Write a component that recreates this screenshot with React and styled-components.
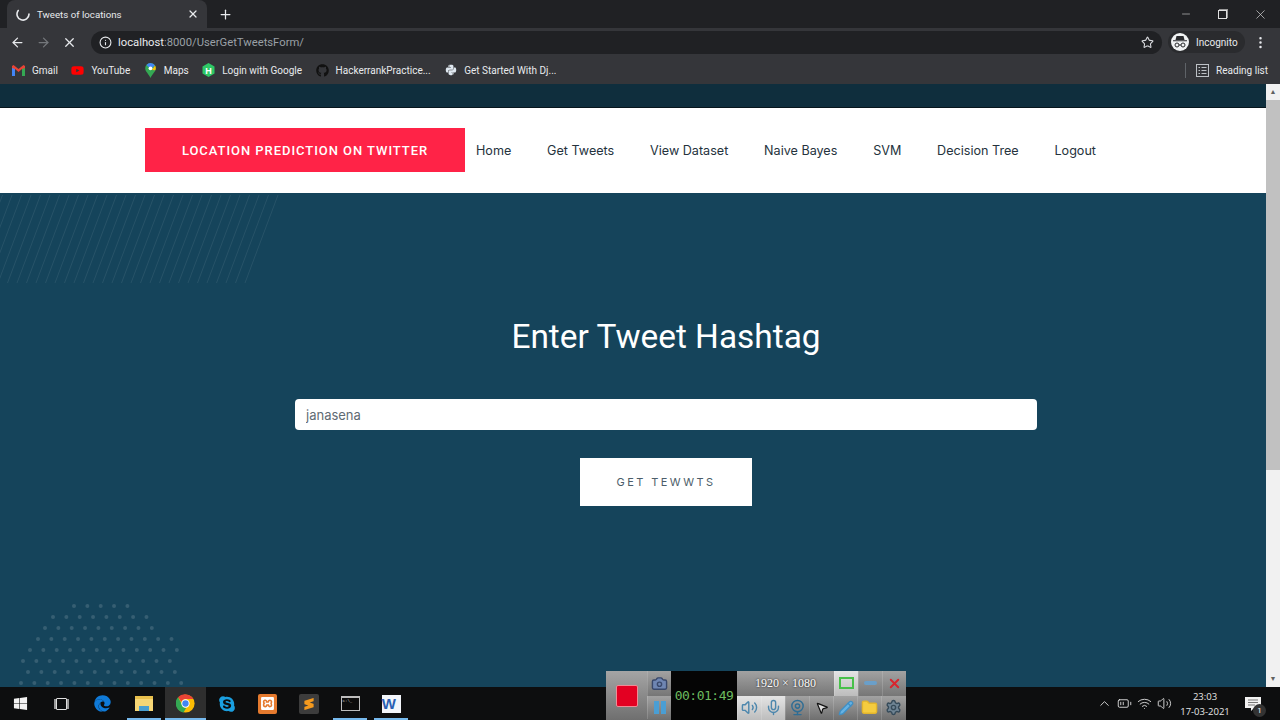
import React from 'react';
import styled, { createGlobalStyle } from 'styled-components';
import {
  ArrowLeft, ArrowRight, X, Plus, Info, Star, MoreVertical, ChevronUp, Wifi, Volume2,
  Camera, Mic, Webcam, MousePointer2, Pencil, Folder, Settings, Minus,
  BatteryMedium,
} from 'lucide-react';
import { FaWindows, FaEdge, FaSkype, FaGithub, FaPython, FaYoutube } from 'react-icons/fa';
import { SiXampp, SiSublimetext } from 'react-icons/si';

const bookmarks = [
  { name: 'Gmail', icon: <GmailIcon /> },
  { name: 'YouTube', icon: <FaYoutube size={13} color="#f00" /> },
  { name: 'Maps', icon: <MapsIcon /> },
  { name: 'Login with Google', icon: <HexBadge /> },
  { name: 'HackerrankPractice...', icon: <FaGithub size={13} color="#111" /> },
  { name: 'Get Started With Dj...', icon: <FaPython size={12} color="#dfe8f0" /> },
];

const navLinks = ['Home', 'Get Tweets', 'View Dataset', 'Naive Bayes', 'SVM', 'Decision Tree', 'Logout'];

const dotRows = [
  [74, 5], [53, 8], [45, 9], [38, 11], [30, 12], [23, 12], [28, 12], [21, 13],
];

function GmailIcon() {
  return (
    <svg width="13" height="11" viewBox="0 0 13 11">
      <path d="M0 1v10h3V4l3.500 3L10 4v7h3V1l-1.500-1L6.500 4 1.500 0z" fill="#ea4335" />
      <path d="M0 3v8h3V4z" fill="#4285f4" />
      <path d="M10 4v7h3V3z" fill="#34a853" />
    </svg>
  );
}

function MapsIcon() {
  return (
    <svg width="11" height="15" viewBox="0 0 11 15">
      <path d="M5.500 0a5.300 5.300 0 0 1 5.300 5.300c0 3.500-3.500 5.500-5.300 9.700C3.700 10.800.2 8.800.2 5.300A5.300 5.300 0 0 1 5.500 0z" fill="#34a853" />
      <path d="M1.500 2a5.300 5.300 0 0 1 4-2 5.300 5.300 0 0 1 4.500 2.500L5.500 6z" fill="#4285f4" />
      <path d="M10 2.500c1 1.600 1 3.300.2 4.800L7 7z" fill="#fbbc04" />
      <circle cx="5.500" cy="5.300" r="1.900" fill="#fff" />
    </svg>
  );
}

function HexBadge() {
  return (
    <svg width="13" height="14" viewBox="0 0 13 14">
      <polygon points="6.500,0 12.500,3.500 12.500,10.500 6.500,14 .5,10.500 .5,3.500" fill="#2ec866" />
      <text x="6.500" y="10.500" textAnchor="middle" fontSize="9" fontWeight="700" fontFamily="Liberation Sans, sans-serif" fill="#fff">H</text>
    </svg>
  );
}

function ChromeIcon() {
  return (
    <svg width="19" height="19" viewBox="0 0 48 48">
      <circle cx="24" cy="24" r="23" fill="#fbbc04" />
      <path d="M24 1a23 23 0 0 1 20 11.500H24a11.500 11.500 0 0 0-10.500 7L5 8.500A23 23 0 0 1 24 1z" fill="#ea4335" />
      <path d="M5 8.500l10 17.500a10 10 0 0 0 11 8.500L19 46.500A23 23 0 0 1 5 8.500z" fill="#34a853" />
      <circle cx="24" cy="24" r="10.500" fill="#fff" />
      <circle cx="24" cy="24" r="8" fill="#4285f4" />
    </svg>
  );
}

function IncognitoIcon() {
  return (
    <svg width="14" height="12" viewBox="0 0 14 12" fill="#2a2b2e">
      <path d="M3.500 0h7l1 4h-9zM0 4.300h14v1H0z" />
      <circle cx="4" cy="9" r="2" fill="none" stroke="#2a2b2e" />
      <circle cx="10" cy="9" r="2" fill="none" stroke="#2a2b2e" />
      <path d="M6 9h2" stroke="#2a2b2e" />
    </svg>
  );
}

function ReadingListIcon() {
  return (
    <svg width="13" height="13" viewBox="0 0 13 13" fill="none" stroke="#bdc1c6">
      <rect x=".5" y=".5" width="12" height="12" />
      <path d="M2.500 3.500h1.500M5.500 3.500h5M2.500 6.500h1.500M5.500 6.500h5M2.500 9.500h1.500M5.500 9.500h5" />
    </svg>
  );
}

function SpinnerIcon() {
  return (
    <svg width="14" height="14" viewBox="0 0 14 14" fill="none">
      <path d="M2.200 3.500A6 6 0 1 0 13 7" stroke="#e8eaed" strokeWidth="1.600" strokeLinecap="round" />
    </svg>
  );
}

function NotificationIcon() {
  return (
    <svg width="16" height="16" viewBox="0 0 16 16">
      <path d="M0 1h16v11H9l-3 3v-3H0z" fill="#f2f2f2" />
      <path d="M3 4h10M3 6.500h10M3 9h7" stroke="#777" />
    </svg>
  );
}

function Stripes() {
  const lines = [];
  for (let x = -40; x < 248; x += 9.5) lines.push(x);
  return (
    <StripeArt width="290" height="92" viewBox="0 0 290 92">
      {lines.map((x) => (
        <line key={x} x1={x} y1="90" x2={x + 33} y2="2" stroke="#fff" strokeOpacity="0.08" />
      ))}
    </StripeArt>
  );
}

function Dots() {
  return (
    <DotArt width="190" height="90" viewBox="0 0 190 90">
      {dotRows.map(([start, count], row) => Array.from({ length: count }, (_, i) => (
        <circle key={`${row}-${i}`} cx={start + i * 13.35} cy={9 + row * 11} r="2" fill="#fff" fillOpacity="0.14" />
      )))}
    </DotArt>
  );
}

function ExplorerIcon() {
  return (
    <ExplorerFolder>
      <ExplorerBand />
    </ExplorerFolder>
  );
}

export default function App() {
  return (
    <Screen>
      <GlobalStyle />
      <TabStrip>
        <Tab>
          <SpinnerIcon />
          <TabTitle>Tweets of locations</TabTitle>
          <X size={12} color="#e8eaed" strokeWidth={2.5} />
        </Tab>
        <NewTab><Plus size={15} strokeWidth={2} /></NewTab>
        <WindowControls>
          <Minus size={12} strokeWidth={1.2} />
          <RestoreBox />
          <X size={15} strokeWidth={1.1} />
        </WindowControls>
      </TabStrip>

      <Toolbar>
        <NavIcons>
          <ArrowLeft size={15} color="#e8eaed" />
          <ArrowRight size={15} color="#74777b" />
          <X size={15} color="#e8eaed" />
        </NavIcons>
        <Omnibox>
          <Info size={13} color="#e8eaed" />
          <Url><b>localhost</b>:8000/UserGetTweetsForm/</Url>
          <Star size={13} color="#dadce0" />
        </Omnibox>
        <IncognitoPill>
          <Avatar><IncognitoIcon /></Avatar>
          Incognito
        </IncognitoPill>
        <MoreVertical size={15} color="#e8eaed" />
      </Toolbar>

      <BookmarkBar>
        <BookmarkList>
          {bookmarks.map((item) => (
            <Bookmark key={item.name}>
              <BookmarkIcon>{item.icon}</BookmarkIcon>
              {item.name}
            </Bookmark>
          ))}
        </BookmarkList>
        <ReadingList>
          <ReadingListIcon />
          Reading list
        </ReadingList>
      </BookmarkBar>

      <Viewport>
        <Page>
          <TopBand />
          <Nav>
            <Brand>LOCATION PREDICTION ON TWITTER</Brand>
            <NavList>
              {navLinks.map((link) => <NavLink key={link}>{link}</NavLink>)}
            </NavList>
          </Nav>
          <Hero>
            <Stripes />
            <Dots />
            <Heading>Enter Tweet Hashtag</Heading>
            <HashtagInput readOnly value="janasena" />
            <SubmitButton>GET TEWWTS</SubmitButton>
          </Hero>
        </Page>
        <Scrollbar>
          <ScrollArrow>▲</ScrollArrow>
          <ScrollThumb />
          <ScrollArrow>▼</ScrollArrow>
        </Scrollbar>
      </Viewport>

      <Taskbar>
        <TaskIcons>
          <TaskItem><FaWindows size={15} color="#f2f2f2" /></TaskItem>
          <TaskItem><TaskViewBox /></TaskItem>
          <TaskItem><FaEdge size={17} color="#0f7ad8" /></TaskItem>
          <TaskItem $open><ExplorerIcon /></TaskItem>
          <TaskItem $open $active><ChromeIcon /></TaskItem>
          <TaskItem><FaSkype size={18} color="#1a9fe0" /></TaskItem>
          <TaskItem><XamppTile><SiXampp size={13} color="#fff" /></XamppTile></TaskItem>
          <TaskItem><SublimeTile><SiSublimetext size={12} color="#f59a1e" /></SublimeTile></TaskItem>
          <TaskItem $open><ConsoleTile>C:\_</ConsoleTile></TaskItem>
          <TaskItem $open><WordTile>W</WordTile></TaskItem>
        </TaskIcons>
        <Tray>
          <ChevronUp size={15} strokeWidth={1.4} />
          <BatteryMedium size={15} strokeWidth={1.4} />
          <Wifi size={15} strokeWidth={1.4} />
          <Volume2 size={15} strokeWidth={1.4} />
          <Clock>
            <span>23:03</span>
            <span>17-03-2021</span>
          </Clock>
          <Notification>
            <NotificationIcon />
            <NotificationCount>1</NotificationCount>
          </Notification>
        </Tray>
      </Taskbar>

      <Recorder>
        <RecordCell><RecordSquare /></RecordCell>
        <SnapColumn>
          <ToolCell><Camera size={17} color="#39486b" fill="#6f86b3" /></ToolCell>
          <ToolCell><PauseBar /><PauseBar /></ToolCell>
        </SnapColumn>
        <Timer>00:01:49</Timer>
        <ToolGrid>
          <ToolRow>
            <SizeLabel>1920 × 1080</SizeLabel>
            <ToolCell $light><GreenFrame /></ToolCell>
            <ToolCell><MinusBar /></ToolCell>
            <ToolCell><X size={15} color="#d9252e" strokeWidth={3} /></ToolCell>
          </ToolRow>
          <ToolRow>
            <ToolCell $light><Volume2 size={17} color="#4d87ad" /></ToolCell>
            <ToolCell $light><Mic size={17} color="#4d87ad" /></ToolCell>
            <ToolCell><Webcam size={17} color="#2f6d94" /></ToolCell>
            <ToolCell><MousePointer2 size={14} color="#111" fill="#ddd" /></ToolCell>
            <ToolCell><Pencil size={16} color="#3f8fc4" fill="#67b2e3" /></ToolCell>
            <ToolCell><Folder size={17} color="#e3b52c" fill="#f5cc3f" /></ToolCell>
            <ToolCell><Settings size={17} color="#364a59" fill="#6f8494" /></ToolCell>
          </ToolRow>
        </ToolGrid>
      </Recorder>
    </Screen>
  );
}

const GlobalStyle = createGlobalStyle`
  html, body {
    margin: 0;
    padding: 0;
    overflow: hidden;
    background: #15445b;
  }
  * {
    box-sizing: border-box;
  }
`;

const Screen = styled.div`
  position: relative;
  display: flex;
  flex-direction: column;
  width: 1280px;
  height: 720px;
  overflow: hidden;
  font-family: Roboto, "Liberation Sans", sans-serif;
`;

const TabStrip = styled.div`
  display: flex;
  align-items: flex-end;
  height: 28px;
  padding-left: 7px;
  background: #202124;
  color: #e8eaed;
`;

const Tab = styled.div`
  display: flex;
  align-items: center;
  width: 200px;
  height: 28px;
  padding: 0 8px 0 9px;
  border-radius: 8px 8px 0 0;
  background: #35363a;
`;

const TabTitle = styled.span`
  flex: 1;
  margin-left: 7px;
  font-size: 9.7px;
  color: #e8eaed;
`;

const NewTab = styled.div`
  display: flex;
  align-items: center;
  height: 28px;
  margin-left: 11px;
`;

const WindowControls = styled.div`
  display: flex;
  align-items: center;
  justify-content: space-between;
  width: 88px;
  height: 28px;
  margin: 0 12px 0 auto;
  color: #d8d8d8;
`;

const RestoreBox = styled.div`
  width: 9px;
  height: 9px;
  border: 1px solid #e0e0e0;
  box-shadow: 1px -1px 0 #9a9a9a;
`;

const Toolbar = styled.div`
  display: flex;
  align-items: center;
  height: 28px;
  padding: 0 11px 0 10px;
  background: #35363a;
`;

const NavIcons = styled.div`
  display: flex;
  align-items: center;
  gap: 11px;
  width: 81px;
`;

const Omnibox = styled.div`
  display: flex;
  align-items: center;
  width: 1071px;
  height: 23px;
  padding: 0 8px;
  border-radius: 12px;
  background: #202124;
`;

const Url = styled.div`
  flex: 1;
  margin: 1px 0 0 6px;
  font-size: 11.25px;
  color: #9aa0a6;

  b {
    font-weight: 400;
    color: #e8eaed;
  }
`;

const IncognitoPill = styled.div`
  display: flex;
  align-items: center;
  gap: 7px;
  width: 77px;
  height: 22px;
  margin: 0 8px 0 6px;
  padding-left: 3px;
  border-radius: 11px;
  background: #2a2b2e;
  font-size: 10px;
  color: #e8eaed;
`;

const Avatar = styled.div`
  display: flex;
  align-items: center;
  justify-content: center;
  width: 18px;
  height: 18px;
  border-radius: 50%;
  background: #f1f3f4;
`;

const BookmarkBar = styled.div`
  display: flex;
  align-items: center;
  justify-content: space-between;
  height: 28px;
  padding: 0 12px;
  background: #35363a;
  font-size: 10px;
  color: #e8eaed;
`;

const BookmarkList = styled.div`
  display: flex;
  align-items: center;
  gap: 13.5px;
`;

const Bookmark = styled.div`
  display: flex;
  align-items: center;
  gap: 7px;
`;

const BookmarkIcon = styled.span`
  display: flex;
  align-items: center;
  justify-content: center;
  width: 13px;
`;

const ReadingList = styled.div`
  display: flex;
  align-items: center;
  gap: 7px;
  height: 15px;
  padding-left: 10px;
  border-left: 1px solid #5f6368;
`;

const Viewport = styled.div`
  display: flex;
  flex: 1;
  min-height: 0;
`;

const Page = styled.div`
  display: flex;
  flex: 1;
  flex-direction: column;
  min-width: 0;
`;

const TopBand = styled.div`
  height: 24px;
  background: #0f2e3d;
  border-bottom: 1px solid #07151c;
`;

const Nav = styled.nav`
  display: flex;
  align-items: center;
  height: 85px;
  padding: 0 0 1px 145px;
  background: #fff;
`;

const Brand = styled.div`
  display: flex;
  align-items: center;
  justify-content: center;
  width: 320px;
  height: 44px;
  background: #ff2347;
  font-family: Roboto, "Liberation Sans", sans-serif;
  font-size: 13px;
  font-weight: 500;
  letter-spacing: 0.95px;
  color: #fff;
`;

const NavList = styled.div`
  display: flex;
  align-items: center;
  gap: 35.8px;
  margin-left: 11px;
`;

const NavLink = styled.a`
  font-family: Inter, "Liberation Sans", sans-serif;
  font-size: 12.6px;
  color: #25333d;
`;

const Hero = styled.main`
  position: relative;
  display: flex;
  flex: 1;
  flex-direction: column;
  align-items: center;
  padding: 125px 0 0 66px;
  overflow: hidden;
  background: #15445b;
`;

const StripeArt = styled.svg`
  position: absolute;
  top: 0;
  left: 0;
`;

const DotArt = styled.svg`
  position: absolute;
  bottom: 0;
  left: 0;
`;

const Heading = styled.h1`
  margin: 0;
  font-family: Roboto, "Liberation Sans", sans-serif;
  font-size: 33.4px;
  font-weight: 400;
  line-height: 38px;
  color: #fff;
`;

const HashtagInput = styled.input`
  width: 742px;
  height: 31px;
  margin-top: 43px;
  padding: 0 11px;
  border: 0;
  border-radius: 4px;
  outline: 0;
  background: #fff;
  font-family: Inter, "Liberation Sans", sans-serif;
  font-size: 13px;
  color: #5f6b73;
`;

const SubmitButton = styled.button`
  width: 172px;
  height: 48px;
  margin-top: 28px;
  border: 0;
  background: #fff;
  font-family: Inter, "Liberation Sans", sans-serif;
  font-size: 11px;
  letter-spacing: 2.4px;
  color: #4c5d69;
`;

const Scrollbar = styled.div`
  display: flex;
  flex-direction: column;
  width: 14px;
  background: #f1f1f1;
`;

const ScrollArrow = styled.div`
  height: 16px;
  font-size: 7px;
  line-height: 16px;
  text-align: center;
  color: #606060;
`;

const ScrollThumb = styled.div`
  height: 370px;
  margin-bottom: auto;
  background: #c1c1c1;
`;

const Taskbar = styled.footer`
  display: flex;
  align-items: center;
  justify-content: space-between;
  height: 33px;
  padding-right: 19px;
  background: #0d0e0f;
`;

const TaskIcons = styled.div`
  display: flex;
  align-items: stretch;
  height: 33px;
`;

const TaskItem = styled.div`
  display: flex;
  align-items: center;
  justify-content: center;
  width: 41.2px;
  height: 33px;
  background-color: ${(p) => (p.$active ? '#2e2e2e' : 'transparent')};
  background-image: ${(p) => (p.$open ? 'linear-gradient(#76b9ed, #76b9ed)' : 'none')};
  background-position: center bottom;
  background-repeat: no-repeat;
  background-size: ${(p) => (p.$active ? '100%' : '34px')} 2px;
`;

const TaskViewBox = styled.div`
  width: 11px;
  height: 12px;
  border: 1px solid #e0e0e0;
  border-radius: 1px;
  box-shadow: -3px 0 0 -1px #9a9a9a, 3px 0 0 -1px #9a9a9a;
`;

const ExplorerFolder = styled.div`
  display: flex;
  align-items: flex-end;
  justify-content: center;
  width: 18px;
  height: 15px;
  border-top: 3px solid #e8c04d;
  background: #f6d675;
`;

const ExplorerBand = styled.div`
  width: 10px;
  height: 5px;
  background: #4a9fd0;
`;

const XamppTile = styled.div`
  display: flex;
  align-items: center;
  justify-content: center;
  width: 19px;
  height: 20px;
  border-radius: 2px;
  background: #e57a2e;
`;

const SublimeTile = styled.div`
  display: flex;
  align-items: center;
  justify-content: center;
  width: 20px;
  height: 20px;
  border-radius: 2px;
  background: #3c3c3c;
`;

const ConsoleTile = styled.div`
  width: 19px;
  height: 15px;
  padding-left: 1px;
  border: 1px solid #bdbdbd;
  border-top-width: 2px;
  background: #0c0c0c;
  font-family: "Liberation Mono", monospace;
  font-size: 4px;
  line-height: 6px;
  color: #ccc;
`;

const WordTile = styled.div`
  width: 19px;
  height: 18px;
  background: #f3f6fb;
  font-family: "Liberation Sans", sans-serif;
  font-size: 15px;
  font-weight: 700;
  line-height: 17px;
  color: #2b5fb3;
`;

const Tray = styled.div`
  display: flex;
  align-items: center;
  gap: 5px;
  color: #e6e6e6;
`;

const Clock = styled.div`
  display: flex;
  flex-direction: column;
  align-items: center;
  width: 56px;
  margin-right: 7px;
  font-family: "Open Sans", sans-serif;
  font-size: 9.5px;
  line-height: 15px;
  color: #e6e6e6;
`;

const Notification = styled.div`
  position: relative;
  display: flex;
`;

const NotificationCount = styled.span`
  position: absolute;
  right: -5px;
  bottom: -5px;
  width: 13px;
  height: 13px;
  border-radius: 50%;
  background: #333;
  font-size: 8px;
  line-height: 13px;
  text-align: center;
  color: #fff;
`;

const Recorder = styled.div`
  position: absolute;
  top: 671px;
  left: 606px;
  display: flex;
  width: 300px;
  height: 49px;
  background: linear-gradient(#a2a2a2 0%, #777 50%, #a2a2a2 51%, #6f6f6f 100%);
`;

const RecordCell = styled.div`
  display: flex;
  align-items: center;
  justify-content: center;
  width: 41px;
  background: linear-gradient(#a5a5a5, #6f6f6f);
`;

const RecordSquare = styled.div`
  width: 22px;
  height: 22px;
  border: 1px solid #f08a95;
  border-radius: 2px;
  background: #e30022;
`;

const SnapColumn = styled.div`
  display: flex;
  flex-direction: column;
  width: 24px;
`;

const ToolCell = styled.div`
  display: flex;
  flex: 0 0 24px;
  align-items: center;
  justify-content: center;
  gap: 2px;
  height: 24.5px;
  background: ${(p) => (p.$light ? 'linear-gradient(#e4e4e4, #bdbdbd)' : 'transparent')};
  border-left: 1px solid rgba(255, 255, 255, 0.15);
`;

const PauseBar = styled.div`
  width: 5px;
  height: 13px;
  background: #4a9ed4;
`;

const Timer = styled.div`
  display: flex;
  align-items: center;
  justify-content: center;
  width: 66px;
  background: #050505;
  font-family: "DejaVu Sans Mono", monospace;
  font-size: 13px;
  letter-spacing: -0.5px;
  color: #6dbb5f;
`;

const ToolGrid = styled.div`
  display: flex;
  flex-direction: column;
  flex: 1;
`;

const ToolRow = styled.div`
  display: flex;
  height: 24.5px;
`;

const SizeLabel = styled.div`
  display: flex;
  flex: 1;
  align-items: center;
  justify-content: center;
  white-space: nowrap;
  font-family: "Liberation Serif", serif;
  font-size: 12px;
  color: #fff;
  text-shadow: 0 0 2px #000;
`;

const GreenFrame = styled.div`
  width: 15px;
  height: 12px;
  border: 2px solid #48c04a;
`;

const MinusBar = styled.div`
  width: 13px;
  height: 4px;
  border-radius: 2px;
  background: #6a9fc9;
`;
